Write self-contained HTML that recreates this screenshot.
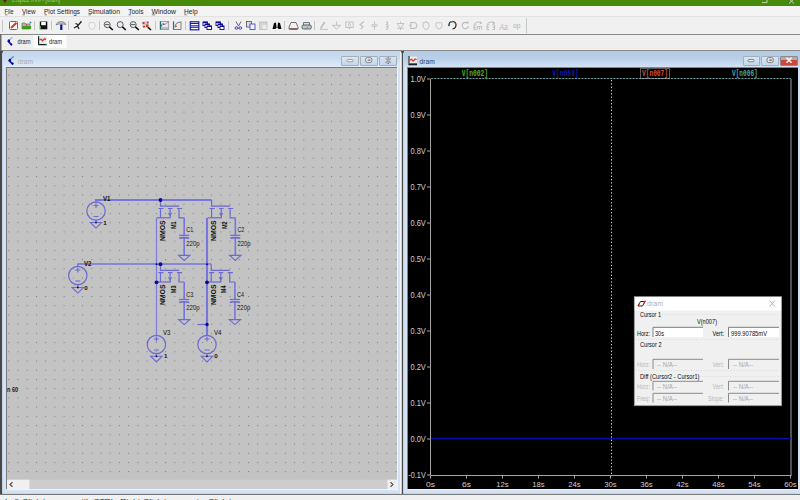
<!DOCTYPE html>
<html><head><meta charset="utf-8">
<style>
*{box-sizing:border-box;margin:0;padding:0}
html,body{width:800px;height:500px;overflow:hidden;background:#f0f0f0;font-family:"Liberation Sans",sans-serif;position:relative}
.a{position:absolute}
#title{left:0;top:0;width:800px;height:6px;background:#478a0a}
#menu{left:0;top:6px;width:800px;height:11px;background:#f4f4f4;border-bottom:1px solid #e2e2e2}
.mi{position:absolute;top:6px;font-size:8px;line-height:10px;color:#222}
#tool{left:0;top:17px;width:800px;height:18px;background:#f0f0f0;border-bottom:1px solid #8a8a8a}
#tabs{left:0;top:35px;width:800px;height:16px;background:#efefef;border-bottom:1px solid #8c8c8c}
#mdi{left:0;top:51px;width:800px;height:443px;background:#484848}
#status{left:0;top:494px;width:800px;height:6px;background:#f0f0f0;border-top:1px solid #7a7a7a}
.win{position:absolute;background:#d4e3f3;border:1px solid #c4d4e6;border-radius:3px 3px 0 0}
.wtb{position:absolute;height:16px;background:linear-gradient(#c2d6ed 0,#c8dbf0 40%,#d4e4f4 70%,#e0ebf7 100%)}
.wt{position:absolute;font-size:8px;color:#a8a8a8;line-height:10px}
.btn{position:absolute;top:55.5px;height:10px;border:1px solid #a6aeb8;border-radius:1px;background:linear-gradient(#d9e6f4,#c3d6ec)}
</style></head><body>
<div id="title" class="a"></div>
<div id="menu" class="a"></div>
<div id="tool" class="a"></div>
<div id="tabs" class="a"></div>
<div id="mdi" class="a"></div>

<!-- schematic window -->
<div class="win" style="left:2px;top:51px;width:400px;height:443px"></div>
<div class="wtb" style="left:3px;top:51px;width:398px"></div>
<div class="a" style="left:6px;top:67px;width:391px;height:422px;background:#c3c3c3;border-top:1px solid #7a7a7a;border-left:1px solid #7a7a7a"></div>
<div class="btn" style="left:341px;width:18px"></div>
<div class="btn" style="left:360px;width:18px"></div>
<div class="btn" style="left:379px;width:18px"></div>

<!-- waveform window -->
<div class="win" style="left:403px;top:51px;width:400px;height:443px"></div>
<div class="wtb" style="left:404px;top:51px;width:398px;background:linear-gradient(#b2cbe6 0,#b8cfe9 45%,#c6d9ef 75%,#d4e3f3 100%)"></div>
<div class="a" style="left:408px;top:68px;width:390px;height:421px;background:#000"></div>
<div class="btn" style="left:743px;width:17px"></div>
<div class="btn" style="left:761px;width:18px"></div>
<div class="btn" style="left:780px;width:18px;border-color:#8a8a8a;background:linear-gradient(#b4acac 0,#b4acac 40%,#d0473a 40%,#d0473a 100%)"></div>

<div id="status" class="a"></div>

<svg class="a" style="left:0;top:0" width="800" height="500" viewBox="0 0 800 500" font-family="Liberation Sans, sans-serif">
<!-- title bar -->
<path d="M3,0 L7,0 L5,3 Z" fill="#5a1a2a"/>
<text x="12" y="2.4" font-size="8" fill="#a8cc88" textLength="48" lengthAdjust="spacingAndGlyphs">LTspice XVII - [dram]</text>
<path d="M762,2.6H767V-1 M764,0V-1" fill="none" stroke="#d8ead0" stroke-width="0.8"/>
<path d="M789,-1 L794,3.5 M794,-1 L789,3.5" stroke="#d8ead0" stroke-width="0.8"/>
<!-- menu -->
<g font-size="7.6" fill="#1e1e1e">
<text x="4.5" y="14" textLength="9" lengthAdjust="spacingAndGlyphs">File</text>
<text x="22" y="14" textLength="13.5" lengthAdjust="spacingAndGlyphs">View</text>
<text x="44" y="14" textLength="36" lengthAdjust="spacingAndGlyphs">Plot Settings</text>
<text x="88" y="14" textLength="32" lengthAdjust="spacingAndGlyphs">Simulation</text>
<text x="128.2" y="14" textLength="15.2" lengthAdjust="spacingAndGlyphs">Tools</text>
<text x="151.5" y="14" textLength="24.5" lengthAdjust="spacingAndGlyphs">Window</text>
<text x="184" y="14" textLength="13.7" lengthAdjust="spacingAndGlyphs">Help</text>
</g>
<g stroke="#333" stroke-width="0.6">
<path d="M5,14.8h2.5 M22.5,14.8h2.5 M44.5,14.8h2.5 M88.5,14.8h2.5 M128.5,14.8h2.5 M151.8,14.8h3.5 M184.3,14.8h2.5"/>
</g>
<!-- toolbar separators -->
<g stroke="#c4c4c4" stroke-width="1">
<path d="M34.5,21v9 M51.5,21v9 M68.5,21v9 M99.5,21v9 M155.5,21v9 M185.5,21v9 M228.5,21v9 M284.5,21v9 M314.5,21v9"/>
</g>
<path d="M526.5,18v15.5" stroke="#c8c8c8" stroke-width="1"/>
<path d="M2.5,20v12" stroke="#c6c6c6" stroke-width="1"/>
<!-- 1 new -->
<rect x="9.5" y="21.5" width="8" height="8" rx="1" fill="#fff" stroke="#6a6a6a"/>
<path d="M11,28 L16.5,22.8" stroke="#d83a28" stroke-width="2.2"/>
<!-- 2 open -->
<path d="M22,23 h3 l1,1 h4 v5 h-8z" fill="#b4b4b4" stroke="#6a6a6a" stroke-width="0.7"/>
<rect x="22" y="26" width="9" height="3" fill="#3c9c1c"/>
<circle cx="26.5" cy="25" r="0.8" fill="#c03020"/>
<circle cx="30.5" cy="22.5" r="0.9" fill="#2a8a9a"/>
<!-- 3 save -->
<rect x="39.8" y="21.5" width="7.5" height="7.8" fill="#101010"/>
<rect x="41.2" y="22" width="4.6" height="3.2" fill="#fff"/>
<rect x="40" y="26" width="1" height="3" fill="#40a030"/>
<!-- 4 hammer -->
<path d="M56,25 Q57,21.5 61,21.6 Q65,21.6 66,24.5 L63,24 L59,24 Z" fill="#c8c8c8" stroke="#707070" stroke-width="0.7"/>
<rect x="60.2" y="24.5" width="2.2" height="5.5" fill="#0a10a0"/>
<!-- 5 run -->
<path d="M74,28 L77.5,26 L81,22 M77.5,26 L79,29 M75.5,23.5 L78,24.5" stroke="#1a1a1a" stroke-width="1.2" fill="none"/>
<circle cx="81" cy="21.8" r="0.9" fill="#3a3a3a"/>
<!-- 6 halt (disabled) -->
<path d="M89,26 v-3 q1,-1.5 2,0 q1,-1.5 2,0 q1,-1 2,0.5 v3 q-1,3 -3,3 q-2,0 -3,-3.5z" fill="#f4f4f4" stroke="#c8c8c8" stroke-width="0.8"/>
<!-- 7-9 zoom -->
<g fill="#e6eaf4" stroke="#5a5a5a" stroke-width="1">
<circle cx="107.2" cy="24.6" r="3"/>
<circle cx="120.2" cy="24.6" r="3"/>
<circle cx="133.2" cy="24.6" r="3"/>
</g>
<g stroke="#111" stroke-width="1.6">
<path d="M109.4,26.8 L112.8,30 M122.4,26.8 L125.8,30 M135.4,26.8 L138.8,30 M147.4,26.8 L151,30"/>
</g>
<path d="M105,24.6h4.4 M131,24.6h4.4" stroke="#333" stroke-width="0.8"/>
<!-- 10 zoom fit -->
<rect x="142.5" y="21.5" width="6" height="6" fill="#c8c8d0"/>
<path d="M142.5,22 h2 v2 h-2z M146,24.5 h2.5 v2.5 h-2.5z M143,26 h2 v1.5 h-2z M147,21.5 h1.5 v2 h-1.5z" fill="#d83a28"/>
<!-- 11 graph -->
<rect x="160.2" y="21.5" width="8.5" height="8" fill="#e8e8e8" stroke="#808080" stroke-width="0.7"/>
<path d="M160.5,21.5v8" stroke="#1a7a7a" stroke-width="1.2"/>
<path d="M161,25 l2,-1.5 l2,1 l3,-2.5" stroke="#7a7ad0" stroke-width="0.8" fill="none"/>
<circle cx="161.5" cy="25.8" r="0.8" fill="#d02020"/><circle cx="163.5" cy="24.2" r="0.8" fill="#d02020"/>
<path d="M161,28 h7" stroke="#808080" stroke-width="0.8"/>
<!-- 12 manual limits -->
<path d="M173.5,21.5 v8 h7.5 v-8" stroke="#606060" stroke-width="0.8" fill="#ececec"/>
<path d="M173.5,21.5v8" stroke="#1a7a7a" stroke-width="1.2"/>
<path d="M175,27.5 q0,-5 5.5,-5.5" stroke="#6a6a6a" stroke-width="0.9" fill="none"/>
<circle cx="176" cy="26.2" r="0.8" fill="#d02020"/>
<!-- 13-15 windows -->
<rect x="190.3" y="21.8" width="8.5" height="8" fill="#fff" stroke="#1a1aa0" stroke-width="1.2"/>
<path d="M190.3,23.5h8.5 M190.3,25.8h8.5 M190.3,27.3h8.5" stroke="#1a1aa0" stroke-width="1"/>
<g fill="#fff" stroke="#1a1aa0" stroke-width="1">
<rect x="203" y="22" width="4.5" height="3.5"/><rect x="205" y="24" width="4.5" height="3.5"/><rect x="207" y="26" width="4.5" height="3.5"/>
<rect x="216" y="22" width="4.5" height="3.5"/><rect x="218" y="24" width="4.5" height="3.5"/><rect x="220" y="26" width="4" height="3.5"/>
</g>
<path d="M203,22.3h4.5 M205,24.3h4.5 M207,26.3h4.5 M216,22.3h4.5 M218,24.3h4.5 M220,26.3h4" stroke="#0a0a90" stroke-width="1.2"/>
<!-- 16 cut -->
<path d="M236,21.5 L238.5,26 L241,21.5" stroke="#555" stroke-width="0.9" fill="none"/>
<ellipse cx="236.5" cy="28" rx="1.5" ry="1.2" fill="none" stroke="#3a3ac0" stroke-width="1"/>
<ellipse cx="240.3" cy="28" rx="1.5" ry="1.2" fill="none" stroke="#3a3ac0" stroke-width="1"/>
<!-- 17 copy -->
<rect x="246.5" y="21.5" width="5" height="5.5" fill="#ddd" stroke="#555" stroke-width="0.8"/>
<rect x="250" y="24" width="5" height="5.5" fill="#f4f4ff" stroke="#4a4ac8" stroke-width="0.9"/>
<!-- 18 paste disabled -->
<rect x="259.5" y="22" width="7.5" height="7.5" fill="#d4d4d4" stroke="#bcbcbc" stroke-width="0.8"/>
<rect x="262.5" y="25" width="4" height="4" fill="#ececec"/>
<!-- 19 binoculars -->
<path d="M272.5,29 L274,23 L276,22.5 L276.5,27 L277.5,27 L278,22.5 L280,23 L281.5,29 L278.5,29 L277.5,27.5 L276.5,27.5 L275.5,29 Z" fill="#0a0a0a"/>
<!-- 20 print preview -->
<path d="M289,27 L291,22.5 L296,22.5 L298,27 L298,29 L289,29 Z" fill="#f0f0f0" stroke="#505050" stroke-width="0.8"/>
<path d="M289.5,29h8" stroke="#5a2010" stroke-width="1"/>
<!-- 21 print -->
<path d="M303.5,22.5 h6 v3 h-6z" fill="#e0e0e0" stroke="#506060" stroke-width="0.8"/>
<rect x="302" y="25" width="9.3" height="4" rx="1.5" fill="#c4c4c4" stroke="#3a5a60" stroke-width="0.9"/>
<rect x="306.8" y="26.8" width="1" height="1" fill="#30b030"/>
<!-- disabled schematic tools -->
<g stroke="#bdbdbd" stroke-width="0.9" fill="none">
<path d="M320.6,28.6 L324.6,22" stroke-width="1.7"/><path d="M320,29.4 h8"/>
<path d="M336.5,21.5 v3.6 M332.3,25.3h8.4 L336.5,29 Z"/>
<rect x="345.8" y="22" width="7.4" height="5.5"/><path d="M349.5,27.5v2 M348,26.5 l1.5,-3.5 l1.5,3.5"/>
<path d="M364,21.5 L360,24.8 L363,26.6 L360.8,29.2" stroke-width="1.1"/>
<path d="M374.5,21.5v3 M371.5,24.8h6 M371.5,26.2h6 M374.5,26.2v3.5"/>
<path d="M386,21.8 q3.2,0.8 0.6,2.7 q3.2,1 0,2.6 q3,1 -0.6,2.6" stroke-width="1.1"/>
<path d="M400.5,21.5v2 M397,23.5h7 L400.5,28z M397,28.2h7 M400.5,28v2"/>
<path d="M410.8,22.5 h2.6 q3.4,0 3.4,3 q0,3 -3.4,3 h-2.6z M409,25.5h1.6" stroke-width="1.1"/>
<path d="M423,26 v-3 q1,-1.5 2,0 v-1 q1,-1 2,0 v1 q1,-1 2,0.5 v3 q-1,3 -3,3 q-2,0 -3,-3.5z"/>
<path d="M436,26 v-3 q1.5,-1 3,0 q1.5,-1 3,0 v3 q-1,3 -3,3 q-2,0 -3,-3z"/>
<path d="M467.5,23.2 a3.2,3.2 0 1 0 1,2.8 M466.2,22.2 l1.6,1 l0.2,-1.8" stroke-width="1.1"/>
<path d="M476.3,24.8h-2.3v4.8h2.3 M474,27.2h2 M477.2,29.6v-3h4.4v3 M479.4,26.6v3 M474.5,23.5 q3.5,-3.2 7,-0.5 M480,21.8 l1.6,1.2 l-1.8,0.8" stroke-width="1"/>
<path d="M489.3,24.8h-2.3v4.8h2.3 M487,27.2h2 M492.3,24.8h2.3v4.8h-2.3 M492.6,27.2h2 M487.5,23.5 q3.5,-3.2 7,-0.5 M493,21.8 l1.6,1.2 l-1.8,0.8" stroke-width="1"/>
</g>
<text x="499.5" y="29.6" font-size="8.6" font-style="italic" fill="#b0b0b0" textLength="8.2" lengthAdjust="spacingAndGlyphs">Aa</text>
<text x="513" y="28.4" font-size="7.2" fill="#b0b0b0" textLength="7.4" lengthAdjust="spacingAndGlyphs">op</text>
<!-- undo colored -->
<path d="M449,25 q0,-3.5 3.5,-3.5 q3.5,0 3.5,3.5 q0,3.5 -3.5,4" stroke="#202020" stroke-width="1.1" fill="none"/>
<path d="M451,22 l2,-0.5" stroke="#30a030" stroke-width="1.3"/>
<path d="M455,23 l1,2" stroke="#d03020" stroke-width="1.3"/>
<circle cx="449" cy="25.3" r="1" fill="#1a6a7a"/>
<!-- tabs -->
<rect x="33.5" y="35" width="33" height="13" fill="#fdfdfd"/>
<path d="M12.3,37.3 L9.5,40" stroke="#90c0e8" stroke-width="1.3" fill="none"/>
<path d="M9.3,39.5 L8.5,41.5 L11.8,45" stroke="#1818b8" stroke-width="1.8" fill="none"/>
<circle cx="8.8" cy="41" r="1.2" fill="#00008a"/><circle cx="11.3" cy="44.5" r="1" fill="#00008a"/>
<text x="17.5" y="44" font-size="7.6" fill="#262626" textLength="13" lengthAdjust="spacingAndGlyphs">dram</text>
<rect x="0" y="34" width="1.5" height="17" fill="#6a6a6a"/>
<rect x="38" y="36.2" width="8.6" height="8.8" fill="#e6eaea"/>
<path d="M38.6,36v8.6 h8" stroke="#1a1a1a" stroke-width="1.1" fill="none"/>
<path d="M39.3,40 l1.8,-0.8 l1.5,1.6 l2,-2 l1.5,0.5" stroke="#d83a2a" stroke-width="1.3" fill="none"/>
<path d="M38.6,36.3v0.8 M38.6,44.4h0.8 M45.5,44.6h1" stroke="#1a7a80" stroke-width="1.1"/>
<text x="49" y="44" font-size="7.6" fill="#262626" textLength="13" lengthAdjust="spacingAndGlyphs">dram</text>
<!-- SCHEM -->
<defs><pattern id="grid" x="8.3" y="74.7" width="9.22" height="9.22" patternUnits="userSpaceOnUse"><rect x="0" y="0" width="1" height="1" fill="#7c7c86"/></pattern></defs>
<rect x="7" y="68" width="390" height="411" fill="url(#grid)"/>
<g stroke="#6a6ad0" stroke-width="1.2" fill="none">
<path d="M160.5,200v6.1 h18.6"/>
<path d="M158.4,208.5h5.1 M168,208.5h4.5 M177,208.5h5.1"/>
<path d="M160.5,208.5V217.8 M170.1,208.5V217.8 M179,208.5V217.8H184.2"/>
<path d="M156.5,217.8H170.7"/>
<path d="M168.5,213 L170.1,215.5 L171.7,213"/>
</g>
<path d="M184.2,217.8V235.3 M184.2,237.8V255.4" stroke="#7676dc" stroke-width="1.6" fill="none"/>
<path d="M179.2,235.3h10" stroke="#6a6ad0" stroke-width="1.2"/>
<path d="M179.2,238.2q5,-1.2 10,0" stroke="#6a6ad0" stroke-width="1.6" fill="none"/>
<path d="M178.5,255.4h11.4 L184.2,260.4z" stroke="#6a6ad0" stroke-width="1.1" fill="none"/>
<g font-size="7.6" font-weight="bold" fill="#101010">
<text transform="translate(164.90,240.9) rotate(-90)" textLength="20.6" lengthAdjust="spacingAndGlyphs">NMOS</text>
<text transform="translate(175.70,229) rotate(-90)" textLength="7.7" lengthAdjust="spacingAndGlyphs">M1</text>
</g>
<g font-size="7.2" fill="#181818">
<text x="186.3" y="232.4" textLength="7" lengthAdjust="spacingAndGlyphs">C1</text>
<text x="186.3" y="246" textLength="13.3" lengthAdjust="spacingAndGlyphs">220p</text>
</g>
<g stroke="#6a6ad0" stroke-width="1.2" fill="none">
<path d="M211.6,200v6.1 h18.6"/>
<path d="M209.5,208.5h5.1 M219.1,208.5h4.5 M228.1,208.5h5.1"/>
<path d="M211.6,208.5V217.8 M221.2,208.5V217.8 M230.1,208.5V217.8H235.3"/>
<path d="M207.6,217.8H221.8"/>
<path d="M219.6,213 L221.2,215.5 L222.8,213"/>
</g>
<path d="M235.3,217.8V235.3 M235.3,237.8V255.4" stroke="#7676dc" stroke-width="1.6" fill="none"/>
<path d="M230.3,235.3h10" stroke="#6a6ad0" stroke-width="1.2"/>
<path d="M230.3,238.2q5,-1.2 10,0" stroke="#6a6ad0" stroke-width="1.6" fill="none"/>
<path d="M229.6,255.4h11.4 L235.3,260.4z" stroke="#6a6ad0" stroke-width="1.1" fill="none"/>
<g font-size="7.6" font-weight="bold" fill="#101010">
<text transform="translate(216.00,240.9) rotate(-90)" textLength="20.6" lengthAdjust="spacingAndGlyphs">NMOS</text>
<text transform="translate(226.80,229) rotate(-90)" textLength="7.7" lengthAdjust="spacingAndGlyphs">M2</text>
</g>
<g font-size="7.2" fill="#181818">
<text x="237.4" y="232.4" textLength="7" lengthAdjust="spacingAndGlyphs">C2</text>
<text x="237.4" y="246" textLength="13.3" lengthAdjust="spacingAndGlyphs">220p</text>
</g>
<g stroke="#6a6ad0" stroke-width="1.2" fill="none">
<path d="M160.5,264.2v6.1 h18.6"/>
<path d="M158.4,272.7h5.1 M168,272.7h4.5 M177,272.7h5.1"/>
<path d="M160.5,272.7V282 M170.1,272.7V282 M179,272.7V282H184.2"/>
<path d="M156.5,282H170.7"/>
<path d="M168.5,277.2 L170.1,279.7 L171.7,277.2"/>
</g>
<path d="M184.2,282V299.5 M184.2,302V319.6" stroke="#7676dc" stroke-width="1.6" fill="none"/>
<path d="M179.2,299.5h10" stroke="#6a6ad0" stroke-width="1.2"/>
<path d="M179.2,302.4q5,-1.2 10,0" stroke="#6a6ad0" stroke-width="1.6" fill="none"/>
<path d="M178.5,319.6h11.4 L184.2,324.6z" stroke="#6a6ad0" stroke-width="1.1" fill="none"/>
<g font-size="7.6" font-weight="bold" fill="#101010">
<text transform="translate(164.90,305.1) rotate(-90)" textLength="20.6" lengthAdjust="spacingAndGlyphs">NMOS</text>
<text transform="translate(175.70,293.2) rotate(-90)" textLength="7.7" lengthAdjust="spacingAndGlyphs">M3</text>
</g>
<g font-size="7.2" fill="#181818">
<text x="186.3" y="296.6" textLength="7" lengthAdjust="spacingAndGlyphs">C3</text>
<text x="186.3" y="310.2" textLength="13.3" lengthAdjust="spacingAndGlyphs">220p</text>
</g>
<g stroke="#6a6ad0" stroke-width="1.2" fill="none">
<path d="M211.2,264.2v6.1 h18.6"/>
<path d="M209.1,272.7h5.1 M218.7,272.7h4.5 M227.7,272.7h5.1"/>
<path d="M211.2,272.7V282 M220.8,272.7V282 M229.7,272.7V282H234.9"/>
<path d="M207.2,282H221.4"/>
<path d="M219.2,277.2 L220.8,279.7 L222.4,277.2"/>
</g>
<path d="M234.9,282V299.5 M234.9,302V319.6" stroke="#7676dc" stroke-width="1.6" fill="none"/>
<path d="M229.9,299.5h10" stroke="#6a6ad0" stroke-width="1.2"/>
<path d="M229.9,302.4q5,-1.2 10,0" stroke="#6a6ad0" stroke-width="1.6" fill="none"/>
<path d="M229.2,319.6h11.4 L234.9,324.6z" stroke="#6a6ad0" stroke-width="1.1" fill="none"/>
<g font-size="7.6" font-weight="bold" fill="#101010">
<text transform="translate(215.60,305.1) rotate(-90)" textLength="20.6" lengthAdjust="spacingAndGlyphs">NMOS</text>
<text transform="translate(226.40,293.2) rotate(-90)" textLength="7.7" lengthAdjust="spacingAndGlyphs">M4</text>
</g>
<g font-size="7.2" fill="#181818">
<text x="237" y="296.6" textLength="7" lengthAdjust="spacingAndGlyphs">C4</text>
<text x="237" y="310.2" textLength="13.3" lengthAdjust="spacingAndGlyphs">220p</text>
</g>
<path d="M96,202V200H211.6 M207,218V335" stroke="#7676dc" stroke-width="2.1" fill="none"/>
<path d="M156.5,218V335" stroke="#7e7ee0" stroke-width="1.3" fill="none"/>
<path d="M77.8,266V264.1H211.2" stroke="#7676dc" stroke-width="1.5" fill="none"/>
<path d="M197.4,324.5H207" stroke="#6a6ad0" stroke-width="1.2"/>
<circle cx="96" cy="211" r="9.2" stroke="#6a6ad0" stroke-width="1.2" fill="none"/>
<path d="M93.5,205.5h5 M96,203v5 M93.5,216.5h5" stroke="#6a6ad0" stroke-width="1.1"/>
<path d="M96,220.2V222.5" stroke="#6a6ad0" stroke-width="1.2"/>
<path d="M90.3,222.5h11.4 L96,228.1z" stroke="#6a6ad0" stroke-width="1.1" fill="none"/>
<circle cx="96" cy="222.5" r="0.9" fill="#101040"/>
<g font-size="7.4" font-weight="bold" fill="#101010"><text x="103" y="201.3" textLength="7.5" lengthAdjust="spacingAndGlyphs">V1</text>
<text x="103.3" y="224.8" font-size="6.2" font-weight="bold">1</text></g>
<circle cx="77.8" cy="275.5" r="9.2" stroke="#6a6ad0" stroke-width="1.2" fill="none"/>
<path d="M75.3,270h5 M77.8,267.5v5 M75.3,281h5" stroke="#6a6ad0" stroke-width="1.1"/>
<path d="M77.8,284.7V287.5" stroke="#6a6ad0" stroke-width="1.2"/>
<path d="M72.1,287.5h11.4 L77.8,293.1z" stroke="#6a6ad0" stroke-width="1.1" fill="none"/>
<circle cx="77.8" cy="287.5" r="0.9" fill="#101040"/>
<g font-size="7.4" font-weight="bold" fill="#101010"><text x="84" y="266" textLength="7.5" lengthAdjust="spacingAndGlyphs">V2</text>
<text x="84.2" y="289.8" font-size="6.2" font-weight="bold">0</text></g>
<circle cx="156.4" cy="344.5" r="9.2" stroke="#6a6ad0" stroke-width="1.2" fill="none"/>
<path d="M153.9,339h5 M156.4,336.5v5 M153.9,350h5" stroke="#6a6ad0" stroke-width="1.1"/>
<path d="M156.4,353.7V356.3" stroke="#6a6ad0" stroke-width="1.2"/>
<path d="M150.7,356.3h11.4 L156.4,361.9z" stroke="#6a6ad0" stroke-width="1.1" fill="none"/>
<circle cx="156.4" cy="356.3" r="0.9" fill="#101040"/>
<g font-size="7.4" fill="#101010"><text x="163" y="335.4" textLength="7.5" lengthAdjust="spacingAndGlyphs">V3</text>
<text x="164" y="358.3" font-size="6.2" font-weight="bold">1</text></g>
<circle cx="207" cy="344.5" r="9.2" stroke="#6a6ad0" stroke-width="1.2" fill="none"/>
<path d="M204.5,339h5 M207,336.5v5 M204.5,350h5" stroke="#6a6ad0" stroke-width="1.1"/>
<path d="M207,353.7V356.3" stroke="#6a6ad0" stroke-width="1.2"/>
<path d="M201.3,356.3h11.4 L207,361.9z" stroke="#6a6ad0" stroke-width="1.1" fill="none"/>
<circle cx="207" cy="356.3" r="0.9" fill="#101040"/>
<g font-size="7.4" fill="#101010"><text x="214" y="335.4" textLength="7.5" lengthAdjust="spacingAndGlyphs">V4</text>
<text x="214.2" y="358.3" font-size="6.2" font-weight="bold">0</text></g>
<circle cx="160.5" cy="200" r="1.9" fill="#0c0c88"/>
<circle cx="160.5" cy="264.2" r="1.9" fill="#0c0c88"/>
<circle cx="156.5" cy="282.3" r="1.9" fill="#0c0c88"/>
<circle cx="207" cy="282.3" r="1.9" fill="#0c0c88"/>
<circle cx="207" cy="324.5" r="1.7" fill="#0c0c88"/>
<circle cx="207" cy="264.2" r="1.0" fill="#0c0c88"/>
<circle cx="156.5" cy="264.2" r="1.0" fill="#0c0c88"/>
<text x="7" y="392" font-size="7.4" font-weight="bold" fill="#181818" textLength="11" lengthAdjust="spacingAndGlyphs">n 60</text>
<!-- scrollbar -->
<rect x="7" y="479.7" width="390" height="9.3" fill="#cdcdcd"/>
<rect x="7" y="479.7" width="22.4" height="9.3" fill="#f0f0f0"/>
<rect x="387.5" y="479.7" width="9.5" height="9.3" fill="#f0f0f0"/>
<path d="M12.5,482.3 L10,484.5 L12.5,486.7 M390.5,482.3 L393,484.5 L390.5,486.7" stroke="#505050" stroke-width="1.2" fill="none"/>
<!-- /SCHEM -->
<!-- plot -->
<g stroke="#a4a4a4" stroke-width="1" fill="none">
<path d="M430.5,79v396.5 h361 M791,79v396.5"/>
<path d="M427,79h3.5 M427,115h3.5 M427,151h3.5 M427,187h3.5 M427,223h3.5 M427,259h3.5 M427,295h3.5 M427,331h3.5 M427,367h3.5 M427,403h3.5 M427,439h3.5 M427,475h3.5 M430.5,475.5v3 M466.5,475.5v3 M502.5,475.5v3 M538.5,475.5v3 M574.5,475.5v3 M610.5,475.5v3 M646.5,475.5v3 M682.5,475.5v3 M718.5,475.5v3 M754.5,475.5v3 M790.5,475.5v3 "/>
</g>
<path d="M431,78.5H791" stroke="#3a160c" stroke-width="1"/>
<path d="M431,78.5H791" stroke="#52a2a6" stroke-width="1" stroke-dasharray="2,1.2"/>
<path d="M431,438.6H791" stroke="#0a0aa4" stroke-width="1.5"/>
<path d="M611.5,80V475" stroke="#d4d4d4" stroke-width="1" stroke-dasharray="1.3,2"/>
<g font-size="8.6" fill="#d0d0d0" text-anchor="end">
<text x="425.8" y="81.6" textLength="15.3" lengthAdjust="spacingAndGlyphs">1.0V</text>
<text x="425.8" y="117.6" textLength="15.3" lengthAdjust="spacingAndGlyphs">0.9V</text>
<text x="425.8" y="153.6" textLength="15.3" lengthAdjust="spacingAndGlyphs">0.8V</text>
<text x="425.8" y="189.6" textLength="15.3" lengthAdjust="spacingAndGlyphs">0.7V</text>
<text x="425.8" y="225.6" textLength="15.3" lengthAdjust="spacingAndGlyphs">0.6V</text>
<text x="425.8" y="261.6" textLength="15.3" lengthAdjust="spacingAndGlyphs">0.5V</text>
<text x="425.8" y="297.6" textLength="15.3" lengthAdjust="spacingAndGlyphs">0.4V</text>
<text x="425.8" y="333.6" textLength="15.3" lengthAdjust="spacingAndGlyphs">0.3V</text>
<text x="425.8" y="369.6" textLength="15.3" lengthAdjust="spacingAndGlyphs">0.2V</text>
<text x="425.8" y="405.6" textLength="15.3" lengthAdjust="spacingAndGlyphs">0.1V</text>
<text x="425.8" y="441.6" textLength="15.3" lengthAdjust="spacingAndGlyphs">0.0V</text>
<text x="425.8" y="477.6" textLength="17.5" lengthAdjust="spacingAndGlyphs">-0.1V</text>
</g>
<g font-size="8" fill="#cfcfcf" text-anchor="middle">
<text x="430.5" y="486.8" textLength="9" lengthAdjust="spacingAndGlyphs">0s</text>
<text x="466.5" y="486.8" textLength="9" lengthAdjust="spacingAndGlyphs">6s</text>
<text x="502.5" y="486.8" textLength="12.5" lengthAdjust="spacingAndGlyphs">12s</text>
<text x="538.5" y="486.8" textLength="12.5" lengthAdjust="spacingAndGlyphs">18s</text>
<text x="574.5" y="486.8" textLength="12.5" lengthAdjust="spacingAndGlyphs">24s</text>
<text x="610.5" y="486.8" textLength="12.5" lengthAdjust="spacingAndGlyphs">30s</text>
<text x="646.5" y="486.8" textLength="12.5" lengthAdjust="spacingAndGlyphs">36s</text>
<text x="682.5" y="486.8" textLength="12.5" lengthAdjust="spacingAndGlyphs">42s</text>
<text x="718.5" y="486.8" textLength="12.5" lengthAdjust="spacingAndGlyphs">48s</text>
<text x="754.5" y="486.8" textLength="12.5" lengthAdjust="spacingAndGlyphs">54s</text>
<text x="790.5" y="486.8" textLength="12.5" lengthAdjust="spacingAndGlyphs">60s</text>
</g>
<g font-size="8.6" font-weight="bold" font-family="Liberation Mono, monospace">
<text x="461.7" y="76.3" fill="#58b020" textLength="26.2" lengthAdjust="spacingAndGlyphs">V[n002]</text>
<text x="552.2" y="76.3" fill="#1616b0" textLength="26.3" lengthAdjust="spacingAndGlyphs">V[n003]</text>
<rect x="640.5" y="68.5" width="29" height="10" fill="none" stroke="#c8c8c8" stroke-width="0.9" stroke-dasharray="1,1"/>
<text x="642" y="76.3" fill="#d84a30" textLength="26" lengthAdjust="spacingAndGlyphs">V[n007]</text>
<text x="732" y="76.3" fill="#4aa4ac" textLength="25.8" lengthAdjust="spacingAndGlyphs">V[n006]</text>
</g>
<!-- window titles -->
<path d="M13.6,56.3 L10.6,59.2" stroke="#6a8ad8" stroke-width="1.3" fill="none"/>
<path d="M10.4,58.8 L9.4,60.8 L13,64.3" stroke="#1818b8" stroke-width="1.8" fill="none"/>
<circle cx="9.8" cy="60.3" r="1.2" fill="#00008a"/><circle cx="12.6" cy="63.6" r="1.1" fill="#00008a"/>
<text x="18" y="63.6" font-size="7.6" fill="#aaaaaa" textLength="15" lengthAdjust="spacingAndGlyphs">dram</text>
<rect x="408" y="56.2" width="9.2" height="8.6" fill="#eceeee" stroke="#c0c0c0" stroke-width="0.5"/>
<path d="M409,56v8.6 h8" stroke="#1a1a1a" stroke-width="1.1" fill="none"/>
<path d="M409.8,60.2 l1.8,-0.8 l1.5,1.6 l2,-2 l1.6,0.5" stroke="#d83a2a" stroke-width="1.3" fill="none"/>
<path d="M409.5,63.6h7.5" stroke="#1a7070" stroke-width="1"/>
<text x="419.5" y="63.6" font-size="7.8" fill="#3a3a4a" textLength="15.2" lengthAdjust="spacingAndGlyphs">dram</text>
<!-- button glyphs -->
<rect x="347" y="59.5" width="6" height="2.2" rx="1" fill="#f4f4f4" stroke="#8a8a8a" stroke-width="0.8"/>
<rect x="365.6" y="57.6" width="6.2" height="5" rx="1.6" fill="#e4e4e4" stroke="#8a8a8a" stroke-width="1"/>
<path d="M367.2,60.6 l1.6,-1 h1.5 v1.2z" fill="#5050a8"/>
<path d="M385.6,58 L390.8,63 M390.8,58 L385.6,63" stroke="#a0a0a0" stroke-width="1.7"/>
<circle cx="388.2" cy="57.8" r="0.7" fill="#4a4ab0"/><circle cx="388.2" cy="63.3" r="0.7" fill="#4a4ab0"/>
<rect x="748" y="59.5" width="6" height="2.2" rx="1" fill="#f4f4f4" stroke="#6a6a7a" stroke-width="0.8"/>
<rect x="767" y="57.6" width="6.2" height="5" rx="1.6" fill="#e8e8e8" stroke="#7a7a7a" stroke-width="1"/>
<path d="M768.6,60.6 l1.6,-1 h1.5 v1.2z" fill="#404060"/>
<path d="M786.5,57.6 L791.5,62.8 M791.5,57.6 L786.5,62.8" stroke="#f4f4f4" stroke-width="1.6"/>
<text x="5" y="504.1" font-size="8" fill="#2a2a2a" textLength="250" lengthAdjust="spacingAndGlyphs">Left-Click to zoom with CTRL. Right-Click to zoom in. Click to pan.</text>
<path d="M397.5,67V489.5 M6,489.5H397.5" stroke="#f2f4f6" stroke-width="1"/>
<path d="M400.5,52V494" stroke="#eef3f9" stroke-width="1"/>
<path d="M407.5,67.5V489 M407,67.5H798" stroke="#7e8690" stroke-width="1"/>
<path d="M408,489.5H798" stroke="#f2f4f6" stroke-width="1"/>
<!-- dialog -->
<rect x="634.3" y="296.7" width="147.3" height="109" fill="#f0f0f0" stroke="#9a9a9a" stroke-width="0.8"/>
<rect x="634.8" y="297.2" width="146.3" height="13.3" fill="#ffffff"/>
<path d="M638,306 L640.5,301.5 L645,301.5 L642.5,306 Z" fill="none" stroke="#202020" stroke-width="1"/>
<path d="M638,306 L639.5,303.5 M643.5,301.5 L645,301.5 L644,303.5" stroke="#d02a20" stroke-width="1.3" fill="none"/>
<text x="647" y="306.3" font-size="7.4" fill="#b0b0b0" textLength="16" lengthAdjust="spacingAndGlyphs">dram</text>
<path d="M769.5,300.5 L775,306.5 M775,300.5 L769.5,306.5" stroke="#a0a0a0" stroke-width="0.8"/>
<g stroke="#d8d8d8" stroke-width="0.8" stroke-dasharray="1,1.5">
<path d="M662,314.5H779 M636,339.5H779 M636,370.5H779 M700,376.5H779"/>
</g>
<g font-size="7.4" fill="#0a0a0a">
<text x="640" y="316.5" textLength="21" lengthAdjust="spacingAndGlyphs">Cursor 1</text>
<text x="697" y="323.8" textLength="20" lengthAdjust="spacingAndGlyphs">V(n007)</text>
<text x="637" y="335.5" textLength="13" lengthAdjust="spacingAndGlyphs">Horz:</text>
<text x="712.5" y="335.5" textLength="11.5" lengthAdjust="spacingAndGlyphs">Vert:</text>
<text x="640" y="346.5" textLength="21.5" lengthAdjust="spacingAndGlyphs">Cursor 2</text>
<text x="640" y="379" textLength="59.5" lengthAdjust="spacingAndGlyphs">Diff (Cursor2 - Cursor1)</text>
</g>
<g font-size="7.4" fill="#b8b8b8">
<text x="637" y="366.5" textLength="13" lengthAdjust="spacingAndGlyphs">Horz:</text>
<text x="712.5" y="366.5" textLength="11.5" lengthAdjust="spacingAndGlyphs">Vert:</text>
<text x="637" y="388.5" textLength="13" lengthAdjust="spacingAndGlyphs">Horz:</text>
<text x="712.5" y="388.5" textLength="11.5" lengthAdjust="spacingAndGlyphs">Vert:</text>
<text x="637" y="400.5" textLength="13" lengthAdjust="spacingAndGlyphs">Freq:</text>
<text x="708" y="400.5" textLength="16" lengthAdjust="spacingAndGlyphs">Slope:</text>
</g>
<g>
<rect x="652.5" y="327" width="50.5" height="10" fill="#ffffff"/>
<rect x="728" y="327" width="51" height="10" fill="#ffffff"/>
<path d="M653,337V327.3H703 M728.5,337V327.3H779" stroke="#7a7a7a" stroke-width="1" fill="none"/>
</g>
<g fill="#f0f0f0" stroke="#8a8a8a" stroke-width="1">
<path d="M653,369V359.3H703 M728.5,369V359.3H779" fill="none"/>
<path d="M653,390.5V381.3H703 M728.5,390.5V381.3H779" fill="none"/>
<path d="M653,402.5V393.3H703 M728.5,402.5V393.3H779" fill="none"/>
</g>
<g font-size="7.4" fill="#0a0a0a">
<text x="655" y="335.5" textLength="9" lengthAdjust="spacingAndGlyphs">30s</text>
<text x="731" y="335.5" textLength="36" lengthAdjust="spacingAndGlyphs">999.90785mV</text>
</g>
<g font-size="7.4" fill="#a8a8a8">
<text x="657" y="367" textLength="20" lengthAdjust="spacingAndGlyphs">-- N/A--</text>
<text x="733" y="367" textLength="20" lengthAdjust="spacingAndGlyphs">-- N/A--</text>
<text x="657" y="388.8" textLength="20" lengthAdjust="spacingAndGlyphs">-- N/A--</text>
<text x="733" y="388.8" textLength="20" lengthAdjust="spacingAndGlyphs">-- N/A--</text>
<text x="657" y="400.8" textLength="20" lengthAdjust="spacingAndGlyphs">-- N/A--</text>
<text x="733" y="400.8" textLength="20" lengthAdjust="spacingAndGlyphs">-- N/A--</text>
</g>
</svg>

</body></html>
